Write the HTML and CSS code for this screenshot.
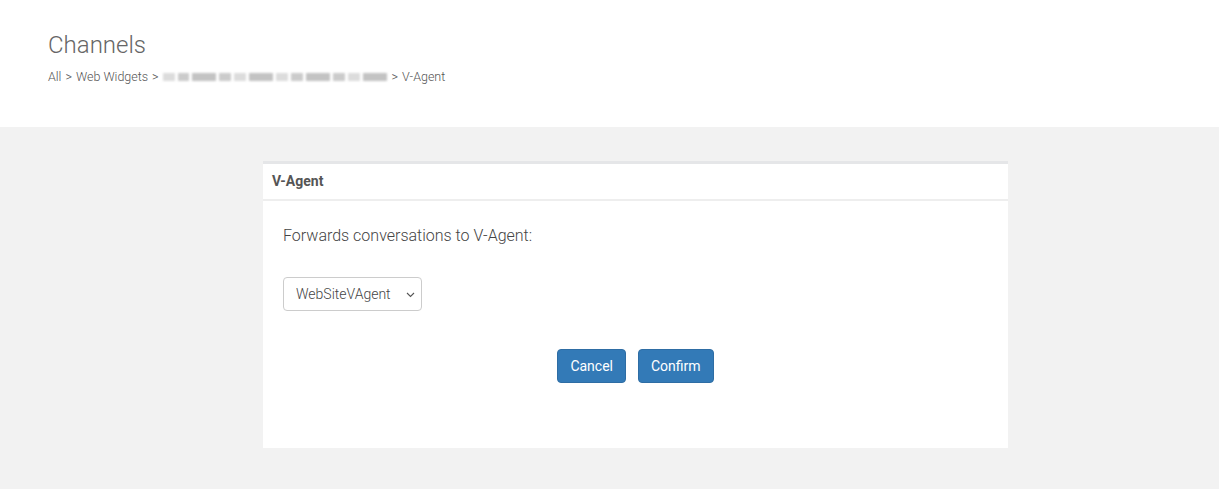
FILE: index.html
```html
<!DOCTYPE html>
<html lang="en">
  <head>
    <meta charset="UTF-8" />
    <title>Channels</title>
    <link rel="stylesheet" href="styles.css">
  </head>
  <body>
    <div class="page-header">
      <h1 class="page-title">Channels</h1>
      <div class="breadcrumb">
        <span>All</span> &gt; <span>Web Widgets</span> &gt;
        <span class="blurred"><i></i><i></i><i></i><i></i><i></i><i></i><i></i><i></i><i></i><i></i><i></i><i></i></span>
        &gt; <span>V-Agent</span>
      </div>
    </div>

    <div class="content">
      <div class="panel">
        <div class="panel-heading">V-Agent</div>
        <div class="panel-body">
          <p class="panel-text">Forwards conversations to V-Agent:</p>
          <div class="select-wrap">
            <select class="agent-select">
              <option>WebSiteVAgent</option>
            </select>
            <svg class="select-arrow" width="9" height="6" viewBox="0 0 9 6"><path d="M1 1l3.5 3.5L8 1" fill="none" stroke="#555" stroke-width="1.1"/></svg>
          </div>
          <div class="actions">
            <button class="btn">Cancel</button>
            <button class="btn">Confirm</button>
          </div>
        </div>
      </div>
    </div>
  </body>
</html>
```

FILE: styles.css
```css
body {
  margin: 0;
  padding: 0;
  background-color: #ffffff;
  font-family: Roboto, "Liberation Sans", Arial, sans-serif;
  color: #666;
}
.page-header {
  height: 127px;
  padding-left: 48px;
  box-sizing: border-box;
  padding-top: 30px;
}
.page-title {
  margin: 0;
  font-size: 24px;
  font-weight: 300;
  color: #666;
  line-height: 30px;
}
.breadcrumb {
  margin-top: 9px;
  font-size: 12.5px;
  font-weight: 300;
  color: #555;
  line-height: 16px;
  display: flex;
  align-items: center;
  gap: 4px;
}
.blurred {
  display: inline-flex;
  gap: 3px;
  width: 224px;
  height: 8px;
  margin-right: 1px;
  filter: blur(1.2px);
  opacity: 0.5;
}
.blurred i {
  flex: 1;
  background: #999;
}
.blurred i:nth-child(odd) {
  background: #bbb;
}
.blurred i:nth-child(3n) {
  flex: 2;
  background: #888;
}
.content {
  background-color: #f2f2f2;
  height: 362px;
  padding-top: 34px;
  box-sizing: border-box;
}
.panel {
  margin-left: 263px;
  width: 745px;
  height: 284px;
  background: #fff;
  border-top: 3px solid #e5e6e8;
}
.panel-heading {
  height: 35px;
  line-height: 35px;
  padding-left: 9px;
  font-size: 14px;
  font-weight: 700;
  color: #555;
  border-bottom: 2px solid #eeeeee;
}
.panel-body {
  padding: 24px 20px 0 20px;
}
.panel-text {
  margin: 0;
  font-size: 16px;
  font-weight: 300;
  line-height: 22px;
  color: #444;
}
.select-wrap {
  margin-top: 30px;
  position: relative;
  width: 139px;
}
.agent-select {
  appearance: none;
  -webkit-appearance: none;
  width: 139px;
  height: 34px;
  padding: 0 8px 0 12px;
  border: 1px solid #ccc;
  border-radius: 4px;
  background: #fff;
  font-family: Roboto, "Liberation Sans", Arial, sans-serif;
  font-size: 14px;
  font-weight: 300;
  color: #444;
}
.select-arrow {
  position: absolute;
  right: 7px;
  top: 15px;
  pointer-events: none;
}
.actions {
  margin-top: 38px;
  display: flex;
  justify-content: center;
  gap: 12px;
}
.btn {
  height: 34px;
  padding: 0 12px;
  font-family: Roboto, "Liberation Sans", Arial, sans-serif;
  font-size: 14px;
  color: #fff;
  background-color: #337ab7;
  border: 1px solid #2e6da4;
  border-radius: 4px;
  cursor: pointer;
}
```
